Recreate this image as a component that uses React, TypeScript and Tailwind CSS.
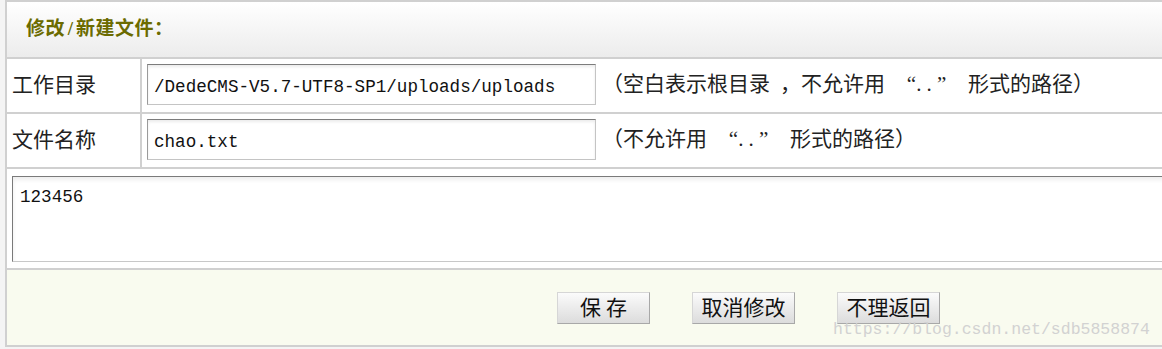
import React from "react";

const cjk = "font-['Liberation_Serif','Noto_Sans_CJK_SC',serif]";
const mono = "font-['Liberation_Mono','Noto_Sans_CJK_SC',monospace]";

// full-width cell for punctuation that SimSun draws at CJK width
function W({ c, className = "" }: { c: string; className?: string }) {
  return <span className={`inline-block w-[21px] text-center ${className}`}>{c}</span>;
}

function Quoted() {
  return (
    <>
      <span className="inline-block w-[10px]" />
      <W c="“" className="text-right" />
      <W c=".." className="tracking-[5px]" />
      <W c="”" className="text-left" />
      <span className="inline-block w-[10px]" />
    </>
  );
}

function Field({ value }: { value: string }) {
  return (
    <div
      className={`w-[449px] h-[41px] border border-[#c4c4c4] border-t-[#7c7c7c] border-l-[#9a9a9a] bg-white shadow-[inset_0_2px_3px_rgba(0,0,0,0.08)] flex items-center pl-[6px] pt-[6px] text-[17.6px] text-[#111] ${mono}`}
    >
      {value}
    </div>
  );
}

function Btn({ label, wide }: { label: string; wide?: boolean }) {
  return (
    <button
      className={`${wide ? "w-[103px]" : "w-[93px]"} h-[32px] border border-[#a8a8a8] border-t-[#d6d6d6] border-l-[#d6d6d6] bg-gradient-to-b from-[#fbfbfb] to-[#dcdcdc] text-[21px] leading-none text-[#111] ${cjk}`}
    >
      {label}
    </button>
  );
}

export default function App() {
  const rows = [
    {
      label: "工作目录",
      value: "/DedeCMS-V5.7-UTF8-SP1/uploads/uploads",
      hint: (
        <>
          （空白表示根目录<span className="inline-block w-[10px]" />
          <W c="，" className="text-left" />
          不允许用<Quoted />形式的路径）
        </>
      ),
    },
    {
      label: "文件名称",
      value: "chao.txt",
      hint: (
        <>
          （不允许用<Quoted />形式的路径）
        </>
      ),
    },
  ];

  return (
    <div className="relative w-[1162px] h-[349px] bg-[#f4f4f4] overflow-hidden pl-[5px]">
      <div className="w-[1200px] border-l-2 border-t-2 border-b-2 border-[#d0d0d0] bg-[#d0d0d0] flex flex-col gap-[2px]">
        {/* Header */}
        <div className="h-[55px] bg-gradient-to-b from-white to-[#ececec] flex items-center pl-[19px]">
          <span className={`text-[19px] font-bold text-[#6b6b00] tracking-[0.5px] ${cjk}`}>
            修改<span className="inline-block w-[11px] text-center">/</span>新建文件：
          </span>
        </div>

        {/* Path + name rows */}
        {rows.map((r) => (
          <div key={r.label} className="h-[53px] flex gap-[2px]">
            <div className={`w-[133px] bg-white flex items-center pl-[5px] text-[21px] text-[#222] ${cjk}`}>
              {r.label}
            </div>
            <div className="flex-1 bg-white flex items-center pl-[5px] pb-[2px]">
              <Field value={r.value} />
              <span className={`ml-[6px] text-[21px] text-[#222] whitespace-pre ${cjk}`}>{r.hint}</span>
            </div>
          </div>
        ))}

        {/* Content */}
        <div className="h-[99px] bg-white pt-[7px] pl-[5px]">
          <div
            className={`w-[1190px] h-[86px] border border-[#c8c8c8] border-t-[#7a7a7a] border-l-[#7a7a7a] shadow-[inset_0_3px_4px_rgba(0,0,0,0.07)] pl-[7px] pt-[7px] text-[17.6px] text-[#111] ${mono}`}
          >
            123456
          </div>
        </div>

        {/* Footer */}
        <div className="h-[75px] bg-[#f9fbef] flex items-start pt-[22px] pl-[550px] gap-[42px]">
          <Btn label="保 存" />
          <Btn label="取消修改" wide />
          <Btn label="不理返回" wide />
        </div>
      </div>

      <span className={`absolute left-[833px] top-[318px] text-[16.5px] text-[#d2d2d2] ${mono}`}>
        https://blog.csdn.net/sdb5858874
      </span>
    </div>
  );
}
